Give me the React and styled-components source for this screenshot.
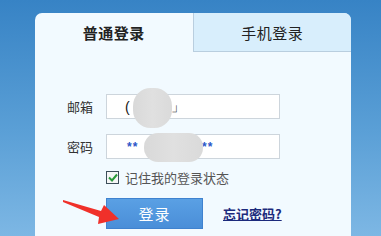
import React from 'react';
import styled, { createGlobalStyle } from 'styled-components';

const Global = createGlobalStyle`
  html, body { margin: 0; padding: 0; }
  body {
    width: 381px;
    height: 236px;
    overflow: hidden;
    font-family: "Noto Sans CJK SC", "Liberation Sans", sans-serif;
  }
`;

const Page = styled.div`
  position: relative;
  width: 381px;
  height: 236px;
  box-sizing: border-box;
  padding: 13px 0 0 35px;
  background: linear-gradient(to bottom, #3783c5 0%, #5a9fd6 55%, #7db7e4 100%);
  overflow: hidden;
`;

const Panel = styled.div`
  width: 316px;
  height: 240px;
  background: #f2faff;
  border-radius: 7px 7px 0 0;
  overflow: hidden;
`;

const Tabs = styled.div`
  display: flex;
  height: 39px;
`;

const Tab = styled.div`
  flex: 1;
  display: flex;
  align-items: center;
  justify-content: center;
  font-size: 15px;
  color: #222;
  font-weight: ${p => (p.$active ? 700 : 400)};
  background: ${p => (p.$active ? 'transparent' : '#d8eefc')};
  border-left: ${p => (p.$active ? 'none' : '1px solid #b9cedf')};
  border-bottom: ${p => (p.$active ? 'none' : '1px solid #b9cedf')};
  letter-spacing: 0.5px;
`;

const Form = styled.div`
  padding: 42px 0 0 32px;
  display: flex;
  flex-direction: column;
`;

const Row = styled.div`
  display: flex;
  align-items: center;
  margin-bottom: 15px;
`;

const Label = styled.div`
  width: 39px;
  font-size: 13px;
  color: #333;
`;

const Field = styled.div`
  position: relative;
  width: 172px;
  height: 23px;
  background: #fff;
  border: 1px solid #cdd5dc;
  display: flex;
  align-items: center;
  font-size: 14px;
`;

const Typed = styled.span`
  position: absolute;
  left: ${p => p.$x}px;
  color: ${p => p.$color || '#111'};
  font-size: ${p => p.$size || 14}px;
  font-weight: ${p => p.$weight || 400};
  font-family: "Liberation Sans", sans-serif;
  letter-spacing: 1px;
`;

const Blob = styled.div`
  position: absolute;
  left: ${p => p.$x}px;
  top: ${p => p.$y}px;
  width: ${p => p.$w}px;
  height: ${p => p.$h}px;
  border-radius: ${p => p.$r};
  background: linear-gradient(to right, #d9d9d9 0%, #e0e0e0 50%, #dadada 100%);
  filter: blur(0.6px);
`;

const CheckRow = styled.div`
  display: flex;
  align-items: center;
  margin: -6px 0 0 39px;
  font-size: 13px;
  color: #555;
`;

const Box = styled.div`
  width: 11px;
  height: 11px;
  border: 1px solid #3d4e5a;
  background: #f6f6f6;
  margin-right: 6px;
  display: flex;
  align-items: center;
  justify-content: center;
`;

const Actions = styled.div`
  display: flex;
  align-items: center;
  margin: 11px 0 0 39px;
`;

const Button = styled.div`
  width: 97px;
  height: 31px;
  background: linear-gradient(to bottom, #5aa0e4, #4a8ed8);
  border: 1px solid #3f82cf;
  box-sizing: border-box;
  color: #fff;
  font-size: 15px;
  display: flex;
  align-items: center;
  justify-content: center;
  letter-spacing: 1px;
`;

const Forgot = styled.a`
  margin-left: 20px;
  font-size: 13px;
  font-weight: 700;
  color: #1c2a7c;
  text-decoration: underline;
`;

const Arrow = styled.svg`
  position: absolute;
  left: 0;
  top: 0;
`;

export default function App() {
  return (
    <>
      <Global />
      <Page>
        <Panel>
          <Tabs>
            <Tab $active>普通登录</Tab>
            <Tab>手机登录</Tab>
          </Tabs>
          <Form>
            <Row>
              <Label>邮箱</Label>
              <Field>
                <Typed $x={18}>(</Typed>
                <Typed $x={64}>」</Typed>
                <Blob $x={26} $y={-7} $w={39} $h={40} $r="45%" />
              </Field>
            </Row>
            <Row>
              <Label>密码</Label>
              <Field>
                <Typed $x={20} $color="#2a56c8" $size={12} $weight={700}>**</Typed>
                <Typed $x={95} $color="#2a56c8" $size={12} $weight={700}>**</Typed>
                <Blob $x={37} $y={-2} $w={59} $h={29} $r="14px" />
              </Field>
            </Row>
            <CheckRow>
              <Box>
                <svg width="10" height="9" viewBox="0 0 10 9">
                  <path d="M1 4.5 L4 7.5 L9 1.5" fill="none" stroke="#2a9a3a" strokeWidth="2" />
                </svg>
              </Box>
              记住我的登录状态
            </CheckRow>
            <Actions>
              <Button>登录</Button>
              <Forgot>忘记密码?</Forgot>
            </Actions>
          </Form>
        </Panel>
        <Arrow width="381" height="236" viewBox="0 0 381 236">
          <polygon points="63,200 101,211 104,205 119,219 98,224 99,217 63,202" fill="#f0302a" />
        </Arrow>
      </Page>
    </>
  );
}
